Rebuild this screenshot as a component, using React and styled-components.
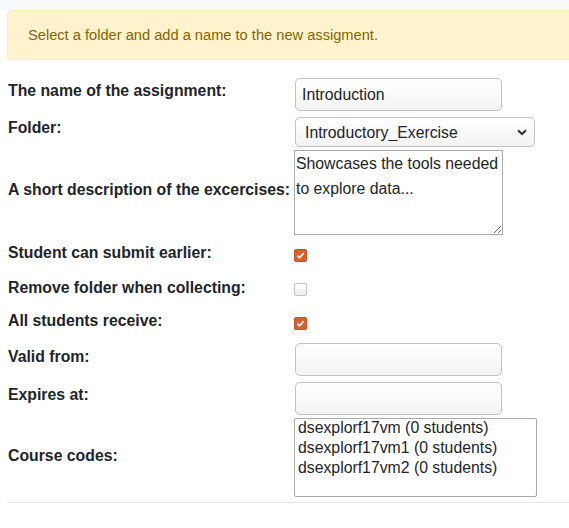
import React from 'react'
import styled, { createGlobalStyle } from 'styled-components'

const GlobalStyle = createGlobalStyle`
  body {
    margin: 0;
    overflow: hidden;
    background: #fff;
    color: #212529;
    font-family: "Liberation Sans", Arial, sans-serif;
  }
`

const Page = styled.div`
  width: 100%;
`

const TopBar = styled.div`
  height: 10px;
  background: #f8f9fa;
`

const Alert = styled.div`
  box-sizing: border-box;
  height: 50px;
  margin-left: 7px;
  padding: 0 20px;
  display: flex;
  align-items: center;
  background: #fff3cd;
  border: 1px solid #ffeeba;
  border-right: none;
  border-radius: 4px 0 0 4px;
  color: #856404;
  font-size: 14.65px;
`

const Form = styled.div`
  padding: 15px 0 0 8px;
`

const Row = styled.div`
  display: flex;
  align-items: center;
  padding: ${p => p.$pad || '3px 0'};
  height: ${p => p.$h || 'auto'};
`

const Label = styled.label`
  flex: none;
  width: 287px;
  padding-bottom: ${p => p.$lift}px;
  font-size: 15.8px;
  font-weight: bold;
  color: #212529;
`

const fieldFont = `
  font-family: "Liberation Sans", Arial, sans-serif;
  font-size: 15.8px;
  color: #212529;
`

const TextInput = styled.input`
  box-sizing: border-box;
  width: 207px;
  height: 33px;
  margin: 0;
  padding: 0 6px;
  border: 1px solid #c2c2c2;
  border-radius: 5px;
  background: linear-gradient(#fff, #f3f3f3);
  outline: none;
  ${fieldFont}
`

const SelectWrap = styled.div`
  position: relative;
  width: 240px;
  height: 30px;
`

const Select = styled.select`
  box-sizing: border-box;
  width: 100%;
  height: 100%;
  margin: 0;
  padding: 0 24px 0 9px;
  appearance: none;
  border: 1px solid #c2c2c2;
  border-radius: 5px;
  background: linear-gradient(#fff, #f3f3f3);
  outline: none;
  ${fieldFont}
`

const Chevron = styled.svg`
  position: absolute;
  right: 8px;
  top: 12px;
  pointer-events: none;
`

const TextArea = styled.textarea`
  box-sizing: border-box;
  width: 209px;
  height: 85px;
  margin: 0 0 0 -1px;
  padding: 0 1px;
  border: 1px solid #a9a9a9;
  line-height: 25px;
  outline: none;
  ${fieldFont}
`

const ListBox = styled.select`
  box-sizing: border-box;
  width: 243px;
  height: 79px;
  margin: 0 0 0 -1px;
  padding: 0;
  border: 1px solid #a9a9a9;
  outline: none;
  overflow: hidden;
  ${fieldFont}

  & option {
    padding: 0 3px 1px;
  }
`

const Box = styled.span`
  box-sizing: border-box;
  display: inline-flex;
  align-items: center;
  justify-content: center;
  width: 13px;
  height: 13px;
  margin-left: -1px;
  border-radius: 2px;
  border: 1px solid ${p => (p.$on ? '#c4552a' : '#c4c4c4')};
  background: ${p => (p.$on ? '#d6612f' : 'linear-gradient(#fff, #ececec)')};
`

const Rule = styled.div`
  margin: 2px 0 0 7px;
  border-top: 1px solid #e6e6e6;
`

const CheckBox = ({ on }) => (
  <Box $on={on}>
    {on && (
      <svg width="11" height="11" viewBox="0 0 11 11">
        <path d="M2.3 5.6 L4.5 7.8 L8.7 3.2" fill="none" stroke="#fff" strokeWidth="1.8" />
      </svg>
    )}
  </Box>
)

const codes = ['dsexplorf17vm', 'dsexplorf17vm1', 'dsexplorf17vm2']

const App = () => (
  <Page>
    <GlobalStyle />
    <TopBar />
    <Alert>Select a folder and add a name to the new assigment.</Alert>

    <Form>
      <Row>
        <Label $lift={8}>The name of the assignment:</Label>
        <TextInput defaultValue="Introduction" />
      </Row>

      <Row>
        <Label $lift={8}>Folder:</Label>
        <SelectWrap>
          <Select defaultValue="Introductory_Exercise">
            <option>Introductory_Exercise</option>
          </Select>
          <Chevron width="10" height="7" viewBox="0 0 10 7">
            <path d="M1 1.2 L5 5 L9 1.2" fill="none" stroke="#333" strokeWidth="2" />
          </Chevron>
        </SelectWrap>
      </Row>

      <Row $pad="0 0 3px">
        <Label $lift={5}>A short description of the excercises:</Label>
        <TextArea defaultValue="Showcases the tools needed to explore data..." />
      </Row>

      <Row $pad="0" $h="34px">
        <Label $lift={4}>Student can submit earlier:</Label>
        <CheckBox on />
      </Row>
      <Row $pad="0" $h="34px">
        <Label $lift={3}>Remove folder when collecting:</Label>
        <CheckBox />
      </Row>
      <Row $pad="0" $h="34px">
        <Label $lift={4}>All students receive:</Label>
        <CheckBox on />
      </Row>

      <Row>
        <Label $lift={5}>Valid from:</Label>
        <TextInput />
      </Row>
      <Row>
        <Label $lift={7}>Expires at:</Label>
        <TextInput />
      </Row>

      <Row $pad="0 0 3px">
        <Label $lift={3}>Course codes:</Label>
        <ListBox multiple size={4}>
          {codes.map(code => (
            <option key={code}>{code} (0 students)</option>
          ))}
        </ListBox>
      </Row>
    </Form>

    <Rule />
  </Page>
)

export default App
